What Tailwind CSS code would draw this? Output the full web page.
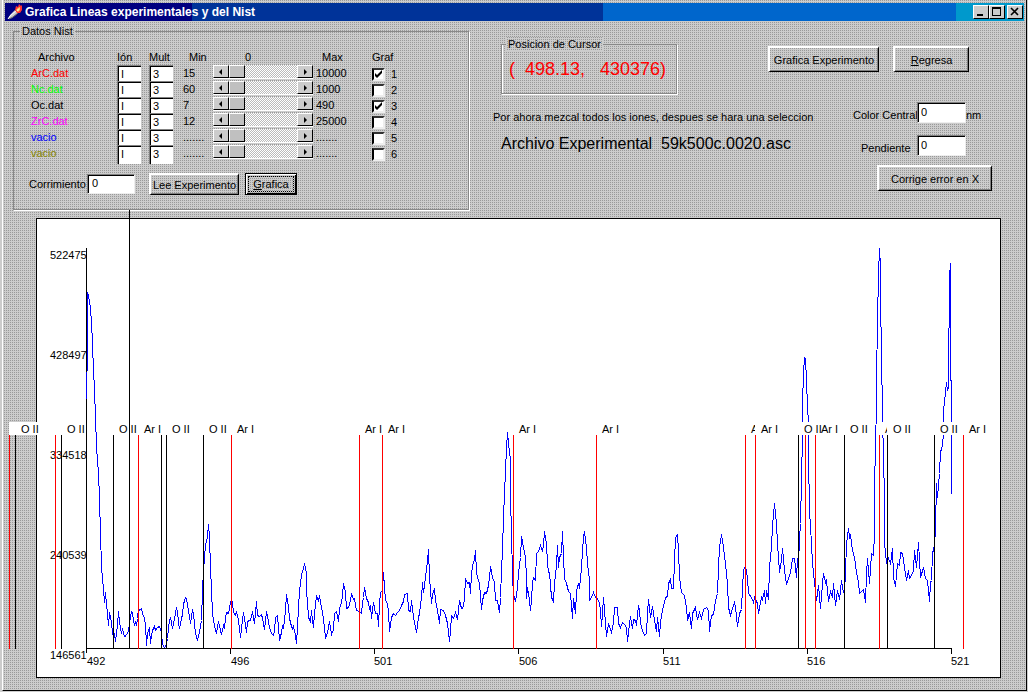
<!DOCTYPE html>
<html lang="es">
<head>
<meta charset="utf-8">
<title>Grafica Lineas experimentales y del Nist</title>
<script src="https://cdn.jsdelivr.net/npm/@tailwindcss/browser@4"></script>
</head>
<body class="bg-[#ccc] font-['Liberation_Sans',Arial,sans-serif] text-[11px] leading-4 text-black">
<div class="mr-px mb-px ml-0.5 border-r border-b border-l border-r-black border-b-black border-l-white bg-[conic-gradient(#999_25%,#ccc_0)] bg-[length:2px_2px]">

  <header class="px-0.5 pt-[3px]">
    <div class="flex h-[18px] items-center gap-0.5 bg-[linear-gradient(90deg,#000080_18.4%,#003399_18.4%_58.7%,#0066cc_58.7%_93.3%,#0099cc_93.3%)] pr-px pl-0.5">
      <svg class="size-4" viewBox="0 0 16 16" aria-hidden="true">
        <path d="M1 15 3 11 8 6 11 9 5 14Z" fill="#ccc"/>
        <path d="M1 15 3 12 9 7" stroke="#fff" fill="none"/>
        <path d="M2 15 6 13 11 9" stroke="#666" fill="none"/>
        <path d="M8 6 9 2 11 3 12 0 14 2 15 1 15 6 13 9 10 9Z" fill="#f33"/>
        <path d="M9 6 11 4 13 3 13 6 11 8Z" fill="#fc6"/>
        <path d="M10 6 12 5 11 7Z" fill="#fff"/>
      </svg>
      <h1 class="grow text-[12px] font-bold whitespace-nowrap text-white">Grafica Lineas experimentales y del Nist</h1>
      <div class="flex">
        <button aria-label="Minimizar" class="flex h-3.5 w-4 items-center justify-center border border-t-white border-r-black border-b-black border-l-white bg-[#ccc]"><svg class="h-3 w-3.5" viewBox="0 0 14 12" shape-rendering="crispEdges"><path d="M3 8h6v2H3z"/></svg></button>
        <button aria-label="Maximizar" class="flex h-3.5 w-4 items-center justify-center border border-t-white border-r-black border-b-black border-l-white bg-[#ccc]"><svg class="h-3 w-3.5" viewBox="0 0 14 12" shape-rendering="crispEdges"><path d="M2 1h9v9H2zM3 3v6h7V3z" fill-rule="evenodd"/></svg></button>
      </div>
      <button aria-label="Cerrar" class="flex h-3.5 w-4 items-center justify-center border border-t-white border-r-black border-b-black border-l-white bg-[#ccc]"><svg class="h-3 w-3.5" viewBox="0 0 14 12"><path d="M3 2 10 9M10 2 3 9" stroke="#000" stroke-width="1.6"/></svg></button>
    </div>
  </header>

  <main>
    <div class="flex items-start">
      <fieldset class="mt-[3px] ml-2.5 w-[456px] shrink-0 border border-[#888] pb-[14px] shadow-[1px_1px_0_#fff]">
        <legend class="ml-1.5 bg-[conic-gradient(#999_25%,#ccc_0)] bg-[length:2px_2px] px-0.5 leading-3.5">Datos Nist</legend>
        <table class="mt-[11px] w-full table-fixed text-left">
          <colgroup><col class="w-[103px]"><col class="w-8"><col class="w-[34px]"><col class="w-[30px]"><col class="w-[103px]"><col class="w-14"><col></colgroup>
          <thead>
            <tr class="h-4 [&>th]:p-0 [&>th]:align-top [&>th]:font-normal">
              <th><span class="pl-6">Archivo</span></th><th>Ión</th><th>Mult</th><th><span class="pl-1.5">Min</span></th><th><span class="pl-8">0</span></th><th><span class="pl-1.5">Max</span></th><th>Graf</th>
            </tr>
          </thead>
          <tbody id="files"></tbody>
        </table>
        <div class="mt-[9px] flex items-center pl-[15px]">
          <label for="corr" class="w-[58px]">Corrimiento</label>
          <input id="corr" value="0" class="h-5 w-12 border border-t-[#808080] border-r-[#eee] border-b-[#eee] border-l-[#808080] bg-white pb-0.5 pl-1 shadow-[inset_1px_1px_0_#000]">
          <button class="ml-3.5 h-[22px] w-[90px] border-t-2 border-r border-b border-l-2 border-t-white border-r-black border-b-black border-l-white whitespace-nowrap shadow-[inset_-1px_-1px_0_#808080]">Lee Experimento</button>
          <button class="ml-1.5 flex h-[22px] w-[52px] items-center justify-center border border-black shadow-[inset_1px_1px_0_#fff,inset_-1px_-1px_0_#000]"><span class="border border-dotted border-black px-1 leading-3.5"><u>G</u>rafica</span></button>
        </div>
      </fieldset>

      <section class="ml-6 w-[275px] shrink-0 whitespace-nowrap">
        <fieldset class="mt-4 ml-2 h-[57px] w-[176px] border border-[#888] shadow-[inset_1px_0_0_#fff,1px_1px_0_#fff]">
          <legend class="ml-1 bg-[conic-gradient(#999_25%,#ccc_0)] bg-[length:2px_2px] px-0.5 leading-3.5">Posicion de Cursor</legend>
          <output class="block pt-1.5 pl-[7px] text-[18px] leading-6 whitespace-pre text-[#f00]">(  498.13,   430376)</output>
        </fieldset>
        <p class="mt-[15px]">Por ahora mezcal todos los iones, despues se hara una seleccion</p>
        <p class="mt-[9px] ml-2 text-[16px] leading-5 whitespace-pre">Archivo Experimental  59k500c.0020.asc</p>
      </section>

      <form class="mt-[25px] mr-[34px] ml-auto w-[224px] shrink-0">
        <div class="flex gap-3.5">
          <button type="button" class="h-[26px] w-[111px] border-t-2 border-r border-b border-l-2 border-t-white border-r-black border-b-black border-l-white whitespace-nowrap shadow-[inset_-1px_-1px_0_#808080]">Grafica Experimento</button>
          <button type="button" class="h-[26px] w-[76px] border-t-2 border-r border-b border-l-2 border-t-white border-r-black border-b-black border-l-white shadow-[inset_-1px_-1px_0_#808080]"><u>R</u>egresa</button>
        </div>
        <div class="mt-[30px] flex items-end pl-[85px]">
          <label for="color" class="w-16 whitespace-nowrap">Color Central</label>
          <input id="color" value="0" class="h-[21px] w-[49px] border border-t-[#808080] border-r-[#eee] border-b-[#eee] border-l-[#808080] bg-white pb-0.5 pl-[3px] shadow-[inset_1px_1px_0_#000]"><span>nm</span>
        </div>
        <div class="mt-3 flex items-end pl-[85px]">
          <label for="pend" class="w-16 pl-2">Pendiente</label>
          <input id="pend" value="0" class="h-[21px] w-[49px] border border-t-[#808080] border-r-[#eee] border-b-[#eee] border-l-[#808080] bg-white pb-0.5 pl-[3px] shadow-[inset_1px_1px_0_#000]">
        </div>
        <button type="button" class="mt-[9px] ml-auto block h-[26px] w-[115px] border-t-2 border-r border-b border-l-2 border-t-white border-r-black border-b-black border-l-white shadow-[inset_-1px_-1px_0_#808080]">Corrige error en X</button>
      </form>
    </div>

    <svg class="block h-auto w-full" viewBox="3 210 1023 480" role="img" aria-label="Espectro experimental" font-size="11">
      <g shape-rendering="crispEdges">
        <rect x="36.5" y="218.5" width="964" height="459" fill="#fff" stroke="#000"/>
      </g>
      <g id="ylabels"></g>
      <g shape-rendering="crispEdges" fill="none" stroke="#000">
        <path d="M86.5 248V653M86 648.5H952M230.500 648V654M374.500 648V654M518.500 648V654M663.500 648V654M807.500 648V654M951.500 648V654"/>
        <polyline id="spectrum" stroke="#00f" transform="translate(.5 .5)" points="86,399 87,345 87,292 88,296 89,300 90,309 91,321 92,344 93,370 94,388 95,418 96,445 97,462 98,470 99,500 100,532 101,567 102,578 103,588 104,602 105,592 106,604 107,613 108,625 109,612 110,616 111,622 112,632 113,636 114,633 115,641 116,633 117,625 118,611 119,622 120,627 121,633 122,628 123,633 124,636 126,635 128,630 129,624 130,616 131,611 132,612 133,620 134,625 135,621 136,625 137,618 138,608 139,610 141,608 142,613 144,618 145,624 146,645 147,633 148,630 149,628 150,643 151,635 152,630 154,626 155,630 157,627 159,626 161,632 162,644 164,647 166,644 167,638 168,628 169,620 170,617 172,628 174,618 176,607 177,611 178,622 179,628 181,618 182,614 183,604 184,600 185,597 186,598 187,604 188,610 190,623 192,609 193,613 194,624 195,633 197,640 199,631 201,620 202,590 203,570 204,557 205,545 207,536 208,524 209,537 210,567 211,590 212,612 213,620 215,630 216,632 218,621 220,630 221,634 223,625 224,628 225,618 226,612 228,613 230,602 231,600 232,602 233,612 235,615 236,611 238,620 239,628 240,637 241,628 243,612 244,618 246,632 247,622 248,620 250,620 252,611 254,623 256,601 257,615 259,616 261,614 262,618 264,629 266,611 267,616 269,627 271,633 273,635 274,630 275,617 277,615 278,627 279,640 281,632 282,625 283,628 285,610 286,594 288,607 289,618 291,626 292,628 293,626 295,635 296,643 297,627 298,607 299,590 301,575 302,570 303,569 304,563 306,573 306,590 307,602 308,617 310,621 311,610 312,620 313,627 314,613 316,595 317,598 318,600 319,595 321,607 322,612 324,627 325,638 327,632 329,621 331,634 333,629 334,613 336,611 338,621 339,608 341,602 342,595 343,583 345,592 346,608 348,607 350,600 351,593 353,599 354,598 356,610 359,611 361,613 362,603 363,597 364,587 366,598 368,602 369,609 370,605 371,618 373,602 375,613 377,613 378,626 379,603 380,592 382,590 383,572 384,587 385,600 387,603 388,612 389,631 391,617 393,613 395,615 397,612 399,610 401,605 403,601 404,594 407,593 408,610 410,611 411,600 413,616 414,622 416,632 418,617 419,613 421,597 422,582 423,592 425,577 426,569 427,560 428,549 429,577 431,603 432,594 434,588 435,600 437,610 439,623 440,609 443,610 445,615 447,623 449,641 450,630 451,615 453,618 455,612 457,619 459,600 461,608 463,607 464,597 465,578 467,583 469,582 470,593 471,573 473,561 474,560 475,550 476,573 478,580 479,583 481,609 482,600 484,592 486,593 488,585 489,577 490,566 492,577 494,582 495,600 497,600 499,612 500,597 501,570 502,550 503,517 504,493 505,470 506,447 507,432 508,443 510,460 510,493 511,537 512,570 513,600 514,597 515,601 517,587 518,572 520,557 521,536 523,547 525,557 526,577 526,598 527,587 529,600 530,610 531,600 532,582 533,577 535,580 536,553 538,551 540,545 542,551 543,545 544,531 546,543 547,563 548,572 549,572 551,597 553,601 554,583 556,565 557,545 558,567 559,557 561,553 562,531 563,557 564,578 566,583 568,591 570,593 572,618 573,598 575,613 576,590 578,583 579,588 581,567 582,550 583,537 584,531 586,547 587,563 589,580 589,600 591,597 593,592 595,597 597,598 599,603 600,610 601,626 602,613 603,597 605,623 606,636 608,623 611,632 613,622 614,607 617,607 618,623 620,627 622,622 624,624 626,627 627,641 629,623 630,616 632,628 633,619 635,620 636,625 638,605 639,610 640,623 642,630 644,635 646,633 647,613 648,599 650,617 652,606 654,620 656,631 657,617 659,636 660,622 662,610 665,597 667,596 668,583 670,579 671,588 673,588 674,560 675,537 677,534 678,550 679,577 681,592 684,595 686,607 687,620 689,612 691,628 692,613 695,607 697,619 699,612 701,618 703,609 706,607 708,610 709,631 711,615 713,614 715,600 717,593 718,567 719,547 721,534 723,547 725,563 727,583 728,607 730,615 732,608 734,602 735,607 737,626 739,613 741,609 742,587 743,570 745,565 747,577 748,593 751,597 753,602 754,597 757,603 758,613 761,597 762,599 764,590 765,603 766,590 768,599 769,567 771,547 772,525 774,503 776,523 777,543 779,572 781,560 782,548 784,570 786,584 788,578 790,572 792,558 794,558 796,577 797,558 798,565 799,538 800,523 801,480 802,435 802,404 803,372 804,357 805,358 806,380 807,407 808,421 808,457 809,510 811,543 812,563 814,582 816,600 818,585 820,608 822,583 823,573 825,582 826,580 828,601 830,591 832,597 833,583 835,605 837,590 839,599 841,580 843,592 844,591 845,572 846,543 848,528 849,537 850,535 852,550 854,557 856,572 858,582 859,593 863,589 865,602 866,573 867,558 869,583 871,553 873,555 874,533 874,483 875,450 876,400 876,380 877,320 878,275 879,248 880,267 880,302 881,350 882,417 884,497 884,543 886,562 888,558 890,563 892,548 893,577 895,586 897,563 899,565 900,552 902,553 904,567 906,580 908,570 909,578 911,575 913,570 914,550 916,567 918,542 920,577 923,567 925,578 927,580 929,601 930,582 931,580 932,553 934,545 935,528 936,483 937,497 939,473 940,450 941,450 943,435 943,410 945,392 946,382 947,390 948,387 948,353 949,303 949,277 950,263 950,380 951,380 951,493"/>
      </g>
      <g id="lines"></g>
      <path d="M129.500 210V649" stroke="#000" shape-rendering="crispEdges"/>
      <g id="xlabels"></g>
    </svg>
  </main>
</div>

<script>
  const files = [
    ['ArC.dat', 'text-[#f00]', '15', '10000', true],
    ['Nc.dat', 'text-[#0f0]', '60', '1000', false],
    ['Oc.dat', 'text-black', '7', '490', true],
    ['ZrC.dat', 'text-[#f0f]', '12', '25000', false],
    ['vacio', 'text-[#00f]', '.......', '.......', false],
    ['vacio', 'text-[#880]', '.......', '.......', false]
  ];
  const arrow = (d, name) => `<button aria-label="${name}" class="flex h-[13px] w-4 items-center justify-center border border-t-white border-r-black border-b-black border-l-white bg-[#ccc]"><svg class="h-2 w-2" viewBox="0 0 8 8"><path d="${d}"/></svg></button>`;
  document.getElementById('files').innerHTML = files.map(([name, color, min, max, on], i) => `
    <tr class="h-4 [&>td]:p-0 [&>td]:align-top">
      <td><span class="pl-[17px] ${color}">${name}</span></td>
      <td><input aria-label="Ión ${i + 1}" value="I" class="block w-6 border-t border-l border-[#808080] bg-white pl-[3px] shadow-[inset_1px_1px_0_#000] ${i === 5 ? 'h-[19px] pb-[3px]' : 'h-4'}"></td>
      <td><input aria-label="Mult ${i + 1}" value="3" class="block w-6 border-t border-l border-[#808080] bg-white pl-[3px] shadow-[inset_1px_1px_0_#000] ${i === 5 ? 'h-[19px] pb-[3px]' : 'h-4'}"></td>
      <td>${min}</td>
      <td><div class="flex w-[100px] border-b border-white">${arrow('M5 1v6L2 4z', 'Menos')}<input type="range" value="0" aria-label="Intensidad ${i + 1}" class="m-0 h-[13px] w-[68px] appearance-none bg-[conic-gradient(#bbb_25%,#fff_0_50%,#bbb_0_75%,#fff_0)] bg-[length:2px_2px] [&::-webkit-slider-thumb]:h-[13px] [&::-webkit-slider-thumb]:w-4 [&::-webkit-slider-thumb]:appearance-none [&::-webkit-slider-thumb]:border [&::-webkit-slider-thumb]:border-t-white [&::-webkit-slider-thumb]:border-r-black [&::-webkit-slider-thumb]:border-b-black [&::-webkit-slider-thumb]:border-l-white [&::-webkit-slider-thumb]:bg-[#c0c0c0]">${arrow('M3 1v6L6 4z', 'Más')}</div></td>
      <td>${max}</td>
      <td><label class="relative flex items-center gap-1.5 pt-[3px] leading-[13px]"><input type="checkbox" ${on ? 'checked' : ''} class="peer size-[13px] appearance-none border-2 border-t-[#333] border-r-[#eee] border-b-[#eee] border-l-black bg-white"><svg class="absolute left-0 hidden size-[13px] peer-checked:block" viewBox="0 0 13 13"><path d="M3 5v3l2 2 5-5V2L5 7z"/></svg>${i + 1}</label></td>
    </tr>`).join('');

  // Emission lines: [x, colour, label, label x, label background width]
  const red = '#f00', black = '#000';
  const marks = [
    [9, red, '', 0, 28], [15, black, 'O II', 21, 22], [55, red, '', 0, 0], [61, black, 'O II', 67, 24],
    [113, black, 'O II', 119, 24], [138, red, 'Ar I', 144, 24], [161, black, '', 0, 0], [166, black, 'O II', 172, 24],
    [203, black, 'O II', 209, 24], [231, red, 'Ar I', 237, 24], [359, red, 'Ar I', 365, 24], [382, red, 'Ar I', 388, 24],
    [513, red, 'Ar I', 519, 24], [596, red, 'Ar I', 602, 24], [745, red, 'A', 751, 24], [755, red, 'Ar I', 761, 24],
    [798, black, 'O II', 804, 24], [805, red, '', 0, 0], [815, red, 'Ar I', 821, 0], [844, black, 'O II', 850, 24],
    [879, red, 'A', 885, 24], [887, black, 'O II', 893, 24], [934, black, 'O II', 940, 24], [963, red, 'Ar I', 969, 24]
  ];
  document.getElementById('lines').innerHTML = marks.map(([x, c, t, tx, w]) =>
    `<rect x="${x}" y="422" width="${w}" height="13" fill="#fff"/><path d="M${x + 0.5} 435V649" stroke="${c}" shape-rendering="crispEdges"/><text x="${tx}" y="433">${t}</text>`).join('');
  document.getElementById('ylabels').innerHTML = [522475, 428497, 334518, 240539, 146561].map((v, i) =>
    `<text x="50" y="${259 + i * 100}">${v}</text>`).join('');
  document.getElementById('xlabels').innerHTML = [[87, 492], [231, 496], [374, 501], [519, 506], [663, 511], [807, 516], [951, 521]].map(([x, v]) =>
    `<text x="${x}" y="665">${v}</text>`).join('');
</script>
</body>
</html>
